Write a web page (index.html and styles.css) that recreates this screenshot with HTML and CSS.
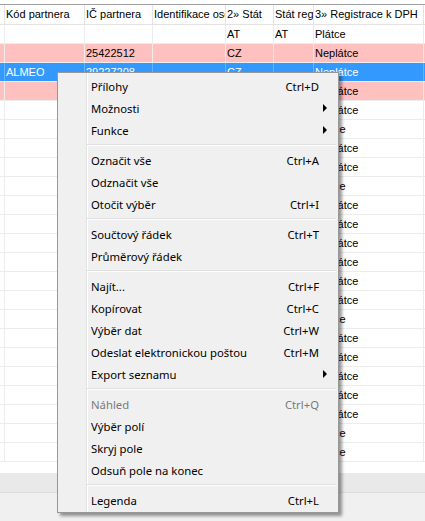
FILE: index.html
```html
<!DOCTYPE html>
<html>
<head>
<meta charset="utf-8">
<link rel="stylesheet" href="styles.css">
</head>
<body>
<div class="screen">
  <div class="grid">
    <div class="row head">
      <div class="c"></div><div class="c">Kód partnera</div><div class="c">IČ partnera</div><div class="c">Identifikace osoby</div><div class="c">2» Stát</div><div class="c">Stát reg</div><div class="c">3» Registrace k DPH</div><div class="c"></div>
    </div>
    <div class="row"><div class="c"></div><div class="c"></div><div class="c"></div><div class="c"></div><div class="c">AT</div><div class="c">AT</div><div class="c">Plátce</div><div class="c"></div></div>
    <div class="row pink"><div class="c"></div><div class="c"></div><div class="c">25422512</div><div class="c"></div><div class="c">CZ</div><div class="c"></div><div class="c">Neplátce</div><div class="c"></div></div>
    <div class="row sel"><div class="c"></div><div class="c">ALMEO</div><div class="c">29227208</div><div class="c"></div><div class="c">CZ</div><div class="c"></div><div class="c">Neplátce</div><div class="c"></div></div>
    <div class="row pink"><div class="c"></div><div class="c"></div><div class="c"></div><div class="c"></div><div class="c">CZ</div><div class="c"></div><div class="c">Neplátce</div><div class="c"></div></div>
    <div class="row"><div class="c"></div><div class="c"></div><div class="c"></div><div class="c"></div><div class="c">CZ</div><div class="c"></div><div class="c">Neplátce</div><div class="c"></div></div>
    <div class="row"><div class="c"></div><div class="c"></div><div class="c"></div><div class="c"></div><div class="c">CZ</div><div class="c"></div><div class="c">Plátce</div><div class="c"></div></div>
    <div class="row"><div class="c"></div><div class="c"></div><div class="c"></div><div class="c"></div><div class="c">CZ</div><div class="c"></div><div class="c">Neplátce</div><div class="c"></div></div>
    <div class="row"><div class="c"></div><div class="c"></div><div class="c"></div><div class="c"></div><div class="c">CZ</div><div class="c"></div><div class="c">Neplátce</div><div class="c"></div></div>
    <div class="row"><div class="c"></div><div class="c"></div><div class="c"></div><div class="c"></div><div class="c">CZ</div><div class="c"></div><div class="c">Plátce</div><div class="c"></div></div>
    <div class="row"><div class="c"></div><div class="c"></div><div class="c"></div><div class="c"></div><div class="c">CZ</div><div class="c"></div><div class="c">Neplátce</div><div class="c"></div></div>
    <div class="row"><div class="c"></div><div class="c"></div><div class="c"></div><div class="c"></div><div class="c">CZ</div><div class="c"></div><div class="c">Neplátce</div><div class="c"></div></div>
    <div class="row"><div class="c"></div><div class="c"></div><div class="c"></div><div class="c"></div><div class="c">CZ</div><div class="c"></div><div class="c">Neplátce</div><div class="c"></div></div>
    <div class="row"><div class="c"></div><div class="c"></div><div class="c"></div><div class="c"></div><div class="c">CZ</div><div class="c"></div><div class="c">Neplátce</div><div class="c"></div></div>
    <div class="row"><div class="c"></div><div class="c"></div><div class="c"></div><div class="c"></div><div class="c">CZ</div><div class="c"></div><div class="c">Neplátce</div><div class="c"></div></div>
    <div class="row"><div class="c"></div><div class="c"></div><div class="c"></div><div class="c"></div><div class="c">CZ</div><div class="c"></div><div class="c">Neplátce</div><div class="c"></div></div>
    <div class="row"><div class="c"></div><div class="c"></div><div class="c"></div><div class="c"></div><div class="c">CZ</div><div class="c"></div><div class="c">Plátce</div><div class="c"></div></div>
    <div class="row"><div class="c"></div><div class="c"></div><div class="c"></div><div class="c"></div><div class="c">CZ</div><div class="c"></div><div class="c">Neplátce</div><div class="c"></div></div>
    <div class="row"><div class="c"></div><div class="c"></div><div class="c"></div><div class="c"></div><div class="c">CZ</div><div class="c"></div><div class="c">Neplátce</div><div class="c"></div></div>
    <div class="row"><div class="c"></div><div class="c"></div><div class="c"></div><div class="c"></div><div class="c">CZ</div><div class="c"></div><div class="c">Neplátce</div><div class="c"></div></div>
    <div class="row"><div class="c"></div><div class="c"></div><div class="c"></div><div class="c"></div><div class="c">CZ</div><div class="c"></div><div class="c">Neplátce</div><div class="c"></div></div>
    <div class="row"><div class="c"></div><div class="c"></div><div class="c"></div><div class="c"></div><div class="c">CZ</div><div class="c"></div><div class="c">Neplátce</div><div class="c"></div></div>
    <div class="row"><div class="c"></div><div class="c"></div><div class="c"></div><div class="c"></div><div class="c">CZ</div><div class="c"></div><div class="c">Plátce</div><div class="c"></div></div>
    <div class="row"><div class="c"></div><div class="c"></div><div class="c"></div><div class="c"></div><div class="c">CZ</div><div class="c"></div><div class="c">Plátce</div><div class="c"></div></div>
  </div>
  <div class="hbar"></div>
  <div class="status"></div>

  <div class="menu">
    <div class="item"><span class="lbl">Přílohy</span><span class="key">Ctrl+D</span><span class="sub"></span></div>
    <div class="item"><span class="lbl">Možnosti</span><span class="key"></span><span class="sub"><i class="arrow"></i></span></div>
    <div class="item"><span class="lbl">Funkce</span><span class="key"></span><span class="sub"><i class="arrow"></i></span></div>
    <div class="sep"></div>
    <div class="item"><span class="lbl">Označit vše</span><span class="key">Ctrl+A</span><span class="sub"></span></div>
    <div class="item"><span class="lbl">Odznačit vše</span><span class="key"></span><span class="sub"></span></div>
    <div class="item"><span class="lbl">Otočit výběr</span><span class="key">Ctrl+I</span><span class="sub"></span></div>
    <div class="sep"></div>
    <div class="item"><span class="lbl">Součtový řádek</span><span class="key">Ctrl+T</span><span class="sub"></span></div>
    <div class="item"><span class="lbl">Průměrový řádek</span><span class="key"></span><span class="sub"></span></div>
    <div class="sep"></div>
    <div class="item"><span class="lbl">Najít...</span><span class="key">Ctrl+F</span><span class="sub"></span></div>
    <div class="item"><span class="lbl">Kopírovat</span><span class="key">Ctrl+C</span><span class="sub"></span></div>
    <div class="item"><span class="lbl">Výběr dat</span><span class="key">Ctrl+W</span><span class="sub"></span></div>
    <div class="item"><span class="lbl">Odeslat elektronickou poštou</span><span class="key">Ctrl+M</span><span class="sub"></span></div>
    <div class="item"><span class="lbl">Export seznamu</span><span class="key"></span><span class="sub"><i class="arrow"></i></span></div>
    <div class="sep"></div>
    <div class="item disabled"><span class="lbl">Náhled</span><span class="key">Ctrl+Q</span><span class="sub"></span></div>
    <div class="item"><span class="lbl">Výběr polí</span><span class="key"></span><span class="sub"></span></div>
    <div class="item"><span class="lbl">Skryj pole</span><span class="key"></span><span class="sub"></span></div>
    <div class="item"><span class="lbl">Odsuň pole na konec</span><span class="key"></span><span class="sub"></span></div>
    <div class="sep"></div>
    <div class="item"><span class="lbl">Legenda</span><span class="key">Ctrl+L</span><span class="sub"></span></div>
  </div>
</div>
</body>
</html>
```

FILE: styles.css
```css
html, body {
  margin: 0;
  padding: 0;
  background: #f0f0f0;
}

.screen {
  position: relative;
  width: 425px;
  height: 521px;
  overflow: hidden;
  display: flex;
  flex-direction: column;
}

.grid {
  height: 473px;
  box-sizing: border-box;
  padding-top: 4px;
  background: #ffffff;
  font-family: "Liberation Sans", Arial, sans-serif;
  font-size: 11px;
  color: #000;
}

.row {
  display: grid;
  grid-template-columns: 5px 80px 68px 73px 48px 40px 110px 1fr;
  height: 19px;
  box-sizing: border-box;
  border-bottom: 1px solid #ececec;
}

.row.head {
  height: 21px;
  border-top: 1px solid #a0a0a0;
  border-bottom: 1px solid #e3e3e3;
}

.c {
  box-sizing: border-box;
  border-right: 1px solid #ececec;
  padding: 0 2px 0 1px;
  line-height: 18px;
  white-space: nowrap;
  overflow: hidden;
}

.head .c {
  line-height: 19px;
  border-right-color: #e3e3e3;
}

.c:last-child {
  border-right: none;
}

.row.pink {
  background: #ffc0c0;
}

.row.sel {
  background: #3399ff;
  color: #ffffff;
}

.row.sel .c {
  border-right-color: #66b2ff;
}

.hbar {
  height: 19px;
  background: #e9e9e9;
  border-bottom: 1px solid #dcdcdc;
}

.status {
  flex: 1;
  background: #f0f0f0;
}

/* context menu */
.menu {
  position: absolute;
  left: 57px;
  top: 72px;
  width: 282px;
  box-sizing: border-box;
  border: 1px solid #979797;
  padding: 2px 2px 1px 2px;
  background: linear-gradient(to right, #f0f0f0 28px, #e2e3e3 28px, #e2e3e3 29px, #ffffff 29px, #ffffff 30px, #f0f0f0 30px);
  box-shadow: 3px 3px 3px rgba(0, 0, 0, 0.4);
  font-family: "Noto Sans", "Open Sans", sans-serif;
  font-size: 11.3px;
  color: #000;
}

.item {
  display: grid;
  grid-template-columns: 1fr auto 17px;
  align-items: center;
  height: 22px;
  padding-left: 31px;
}

.item.disabled {
  color: #7a7a7a;
}

.key {
  text-align: right;
}

.sub {
  display: flex;
  align-items: center;
  padding-left: 4px;
}

.arrow {
  display: block;
  width: 0;
  height: 0;
  border-left: 4px solid #000;
  border-top: 4px solid transparent;
  border-bottom: 4px solid transparent;
}

.sep {
  height: 8px;
  margin-left: 27px;
  display: flex;
  flex-direction: column;
  justify-content: center;
}

.sep::before {
  content: "";
  display: block;
  height: 1px;
  background: #e0e0e0;
}

.sep::after {
  content: "";
  display: block;
  height: 1px;
  background: #ffffff;
}
```
